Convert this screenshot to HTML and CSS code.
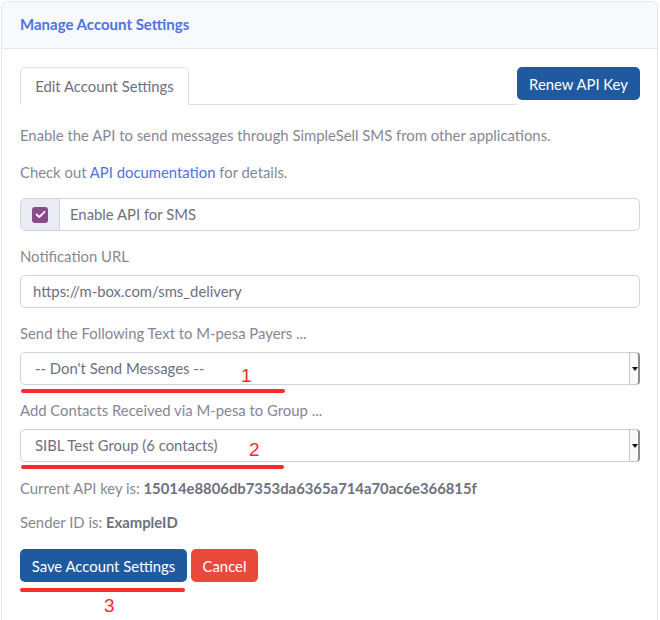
FILE: index.html
```html
<!DOCTYPE html>
<html>
<head>
<meta charset="utf-8">
<link rel="stylesheet" href="styles.css">
</head>
<body>
<div class="card">
  <div class="card-header">Manage Account Settings</div>
  <div class="card-body">
    <div class="tab-row">
      <div class="tabs"><div class="tab">Edit Account Settings</div></div>
      <button class="btn btn-primary btn-renew">Renew API Key</button>
    </div>
    <p class="text p1">Enable the API to send messages through SimpleSell SMS from other applications.</p>
    <p class="text p2">Check out <a class="link">API documentation</a> for details.</p>
    <div class="input-group">
      <div class="prepend"><span class="checkbox"><svg width="11" height="9" viewBox="0 0 11 9"><path d="M1.5 4.5 L4.3 7 L9.5 1.8" fill="none" stroke="#fff" stroke-width="1.8" stroke-linecap="round" stroke-linejoin="round"/></svg></span></div>
      <div class="group-text">Enable API for SMS</div>
    </div>
    <div class="text label">Notification URL</div>
    <div class="field">https://m-box.com/sms_delivery</div>
    <div class="text label">Send the Following Text to M-pesa Payers ...</div>
    <div class="annot-wrap">
      <div class="select"><span class="select-text">-- Don't Send Messages --</span><span class="arrow"></span></div>
      <span class="mark mark1">1</span>
      <span class="uline uline1"></span>
    </div>
    <div class="text label">Add Contacts Received via M-pesa to Group ...</div>
    <div class="annot-wrap">
      <div class="select"><span class="select-text">SIBL Test Group (6 contacts)</span><span class="arrow"></span></div>
      <span class="mark mark2">2</span>
      <span class="uline uline2"></span>
    </div>
    <p class="text key">Current API key is: <b>15014e8806db7353da6365a714a70ac6e366815f</b></p>
    <p class="text sender">Sender ID is: <b>ExampleID</b></p>
    <div class="annot-wrap actions">
      <button class="btn btn-primary btn-save">Save Account Settings</button>
      <button class="btn btn-danger btn-cancel">Cancel</button>
      <span class="uline uline3"></span>
      <span class="mark mark3">3</span>
    </div>
  </div>
</div>
</body>
</html>
```

FILE: styles.css
```css
* { box-sizing: border-box; }
html, body { margin: 0; padding: 0; }
body {
  background: #ffffff;
  font-family: Lato, "Noto Sans", "Liberation Sans", sans-serif;
  font-size: 14.85px;
  color: #858796;
  width: 660px;
  height: 620px;
  overflow: hidden;
}
.card {
  margin: 1px 2px 0 1px;
  border: 1px solid #e3e6f0;
  border-bottom: none;
  border-radius: 6px 6px 0 0;
  height: 640px;
}
.card-header {
  height: 47px;
  line-height: 45px;
  background: #f8f9fc;
  border-bottom: 1px solid #e3e6f0;
  border-radius: 6px 6px 0 0;
  padding: 0 18px;
  color: #4e73df;
  font-weight: 700;
  font-size: 15px;
}
.card-body { padding: 18px 17px 0 18px; }
.tab-row { display: flex; align-items: flex-start; }
.tabs {
  flex: 1;
  height: 38px;
  border-bottom: 1px solid #dddfeb;
}
.tab {
  width: 169px;
  height: 38px;
  border: 1px solid #dddfeb;
  border-bottom-color: #fff;
  border-radius: 5px 5px 0 0;
  background: #fff;
  color: #6e707e;
  text-align: center;
  line-height: 36px;
}
.btn {
  font-family: inherit;
  font-size: 14.85px;
  height: 33px;
  border: none;
  border-radius: 5px;
  color: #fff;
  padding: 0;
  cursor: pointer;
}
.btn-primary { background: #1f5aa0; }
.btn-danger { background: #e74a3b; }
.btn-renew { width: 123px; }
.btn-save { width: 167px; }
.btn-cancel { width: 67px; }
.text { line-height: 22px; margin: 0; }
.p1 { margin-top: 19px; }
.p2 { margin-top: 15px; }
.link { color: #4e73df; text-decoration: none; }
.input-group {
  margin-top: 15px;
  display: flex;
  height: 33px;
  border: 1px solid #d1d3e2;
  border-radius: 5px;
  overflow: hidden;
}
.prepend {
  width: 39px;
  background: #eaecf4;
  border-right: 1px solid #d1d3e2;
  display: flex;
  align-items: center;
  justify-content: center;
}
.checkbox {
  width: 16px;
  height: 16px;
  background: #8a4b8c;
  border-radius: 3px;
  display: flex;
  align-items: center;
  justify-content: center;
}
.group-text {
  flex: 1;
  line-height: 31px;
  padding-left: 10px;
  color: #6e707e;
}
.label { margin-top: 14px; }
.field {
  margin-top: 8px;
  height: 33px;
  line-height: 31px;
  border: 1px solid #d1d3e2;
  border-radius: 5px;
  padding-left: 12px;
  color: #6e707e;
}
.annot-wrap { position: relative; margin-top: 8px; }
.select {
  display: flex;
  height: 33px;
  border: 1px solid #d1d3e2;
  border-right: none;
  border-radius: 5px;
  color: #6e707e;
}
.select-text { flex: 1; line-height: 31px; padding-left: 14px; }
.arrow {
  width: 11px;
  margin: -1px 0;
  background: #fafafa;
  border: 1px solid #c9c9c9;
  border-right: 2px solid #8d8d8d;
  border-radius: 0 4px 4px 0;
  position: relative;
}
.arrow::after {
  content: "";
  position: absolute;
  left: 2px;
  top: 14px;
  border-left: 3px solid transparent;
  border-right: 3px solid transparent;
  border-top: 4px solid #111;
}
.mark {
  position: absolute;
  color: #ff2a2a;
  font-family: "Liberation Sans", Arial, sans-serif;
  font-size: 19px;
  line-height: 20px;
}
.uline {
  position: absolute;
  height: 4px;
  background: #ff2a2a;
  border-radius: 2px;
}
.mark1 { left: 221px; top: 14px; }
.uline1 { left: 1px; width: 264px; top: 37px; }
.mark2 { left: 229px; top: 11px; }
.uline2 { left: 1px; width: 263px; top: 36px; }
.key { margin-top: 15px; }
.sender { margin-top: 12px; }
b { color: #6e707e; font-weight: 700; }
.actions { margin-top: 16px; display: flex; gap: 4px; }
.uline3 { left: 0; width: 165px; top: 39px; }
.mark3 { left: 84px; top: 47px; }
```
